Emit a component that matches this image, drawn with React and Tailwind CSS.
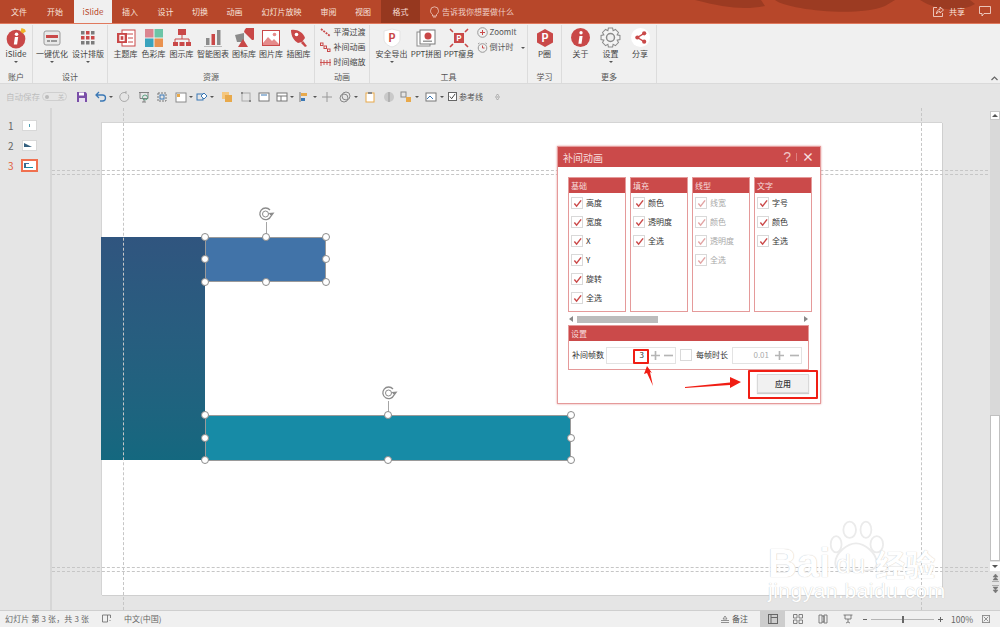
import React from "react";

const FONT = { fontFamily: '"Noto Sans CJK SC","Noto Sans",sans-serif' };

const Tab = ({ w, children, active, dark }) => (
  <div className={`flex h-full items-center justify-center text-[8px] ${w} ${active ? "bg-[#f0f0f0] text-[#b7472a]" : dark ? "bg-[#96381f] text-[#f6ddd6]" : "text-[#f8e3dd]"}`}>{children}</div>
);

const Caret = () => <span className="mt-[1px] block h-0 w-0 border-x-[2px] border-t-[2px] border-x-transparent border-t-[#555]" />;

const Item = ({ w, icon, label, caret }) => (
  <div className={`flex h-full shrink-0 flex-col items-center pt-[2px] ${w}`}>
    <div className="flex h-[21px] w-[22px] items-center justify-center">{icon}</div>
    <div className="whitespace-nowrap text-[8px] leading-[12px] text-[#444]">{label}</div>
    {caret && <Caret />}
  </div>
);

const Group = ({ w, label, children }) => (
  <div className={`flex h-full shrink-0 flex-col border-r border-[#dcdcdc] ${w}`}>
    <div className="flex h-[45px] shrink-0 justify-center">{children}</div>
    <div className="text-center text-[8px] leading-[14px] text-[#555]">{label}</div>
  </div>
);

const S = ({ children, size = 20 }) => <svg width={size} height={size} viewBox="0 0 20 20">{children}</svg>;

const ISlideIcon = () => (
  <S size={22}><circle cx="10" cy="11" r="8.5" fill="#c94848" /><circle cx="10.5" cy="6.5" r="1.6" fill="#fff" /><path d="M9 9h3l-1 7H8z" fill="#fff" /><path d="M15 1l3 1 1 2-3 2-2-2z" fill="#f0b429" /></S>
);
const OptIcon = () => (
  <S><rect x="2" y="3" width="16" height="14" rx="2" fill="#e8e8e8" stroke="#9a9a9a" /><rect x="4" y="7" width="12" height="3" fill="#c94848" /><rect x="5" y="12" width="3" height="2" fill="#999" /><rect x="9" y="12" width="6" height="2" fill="#999" /></S>
);
const GridIcon = () => (
  <S>{[3, 8, 13].flatMap((y, r) => [3, 8, 13].map((x, c) => <rect key={`${r}${c}`} x={x} y={y} width="3.5" height="3.5" fill={(r === 0 && c === 1) || r === 1 ? "#c94848" : "#7b7b7b"} />))}</S>
);
const ThemeIcon = () => (
  <S><rect x="6" y="2" width="13" height="16" fill="#fff" stroke="#c94848" /><path d="M8 6h9M12 10h5M12 14h5" stroke="#c94848" /><rect x="1" y="5" width="10" height="10" fill="#c94848" /><rect x="4" y="7.5" width="4" height="5" fill="none" stroke="#fff" strokeWidth="1.3" /></S>
);
const ColorIcon = () => (
  <S><rect x="1" y="1" width="8.5" height="8.5" fill="#db8590" /><rect x="10.5" y="1" width="8.5" height="8.5" fill="#6cc5a7" /><rect x="1" y="10.5" width="8.5" height="8.5" fill="#3aa3bd" /><rect x="10.5" y="10.5" width="8.5" height="8.5" fill="#e9924f" /></S>
);
const OrgIcon = () => (
  <S><rect x="6" y="1" width="8" height="6" fill="#c94848" /><path d="M10 7v4M3 11h14M3 11v3M17 11v3" stroke="#c94848" fill="none" /><rect x="1" y="14" width="5" height="4" fill="#c94848" /><rect x="7.5" y="14" width="5" height="4" fill="#c94848" /><rect x="14" y="14" width="5" height="4" fill="#c94848" /></S>
);
const ChartIcon = () => (
  <S><rect x="3" y="10" width="3.5" height="7" fill="#8b8b8b" /><rect x="8.5" y="6" width="3.5" height="11" fill="#c94848" /><rect x="14" y="2" width="3.5" height="15" fill="#8b8b8b" /><path d="M1 18.5h18" stroke="#bbb" /></S>
);
const IconLib = () => (
  <S><path d="M10 4a7 7 0 1 1 8 8z" fill="#c94848" /><path d="M1 7l9-2v9H3z" fill="#8b8b8b" /><path d="M9 11l5 8H4z" fill="#c94848" /></S>
);
const PicIcon = () => (
  <S><rect x="1.5" y="2.5" width="17" height="15" fill="#fff" stroke="#c94848" /><circle cx="13.5" cy="6.5" r="1.8" fill="#e58b8b" /><path d="M2 15l5-6 4 4 2-2 5 5v1H2z" fill="#e58b8b" /></S>
);
const RocketIcon = () => (
  <S><path d="M2 2c6-1 12 2 14 8l-3 4-4 1C5 13 2 8 2 2z" fill="#c94848" /><circle cx="7.5" cy="6.5" r="1.8" fill="#fff" /><path d="M14 13l4 5-2 1-4-4z" fill="#c94848" /></S>
);
const Shield = () => (
  <S><path d="M10 1l8 2v8c0 4-4 7-8 8-4-1-8-4-8-8V3z" fill="#fff" stroke="#e3e3e3" /><text x="10" y="14" textAnchor="middle" fontSize="11" fontWeight="700" fill="#c94848">P</text></S>
);
const Collage = () => (
  <S><rect x="1" y="4" width="13" height="14" fill="#fff" stroke="#8b8b8b" /><rect x="4" y="2" width="15" height="14" fill="#fff" stroke="#777" /><circle cx="12" cy="8" r="3.5" fill="#c94848" /><rect x="7" y="12.5" width="9" height="1.5" fill="#999" /></S>
);
const Slim = () => (
  <S><rect x="5" y="5" width="10" height="10" fill="#c94848" /><text x="10" y="13" textAnchor="middle" fontSize="8" fontWeight="700" fill="#fff">P</text><path d="M1 1l3 3M19 1l-3 3M1 19l3-3M19 19l-3-3" stroke="#c94848" strokeWidth="1.6" /></S>
);
const Hex = () => (
  <S><path d="M10 1l8 4.5v9L10 19l-8-4.5v-9z" fill="#c94848" /><text x="10" y="14" textAnchor="middle" fontSize="11" fontWeight="700" fill="#fff">P</text></S>
);
const About = () => (
  <S size={21}><circle cx="10" cy="10" r="9" fill="#c94848" /><circle cx="10.5" cy="5.5" r="1.6" fill="#fff" /><path d="M9 8.5h3L11 16H8z" fill="#fff" /></S>
);
const Gear = () => (
  <S size={21}><path d="M8 1h4l.5 2.5 2.2-1.2 2.9 2.9-1.3 2.2L19 8v4l-2.7.6 1.3 2.2-2.9 2.9-2.2-1.3L12 19H8l-.5-2.6-2.2 1.3-2.9-2.9 1.3-2.2L1 12V8l2.7-.6-1.3-2.2 2.9-2.9 2.2 1.2z" fill="#f4f4f4" stroke="#8b8b8b" /><circle cx="10" cy="10" r="3.8" fill="#f0f0f0" stroke="#8b8b8b" strokeWidth="1.4" /></S>
);
const ShareIcon = () => (
  <S size={21}><circle cx="10" cy="10" r="9" fill="#fff" /><path d="M13.5 6L7 10l6.5 4" stroke="#c94848" strokeWidth="1.3" fill="none" /><circle cx="13.5" cy="6" r="2" fill="#c94848" /><circle cx="7" cy="10" r="2" fill="#c94848" /><circle cx="13.5" cy="14" r="2" fill="#c94848" /></S>
);

const Q = ({ ml, children }) => <svg className={`shrink-0 ${ml}`} width="12" height="12" viewBox="0 0 12 12" fill="none">{children}</svg>;
const QCaret = ({ ml }) => <span className={`block h-0 w-0 shrink-0 border-x-[2px] border-t-[2px] border-x-transparent border-t-[#555] ${ml}`} />;

const Check = ({ dim }) => (
  <div className="flex h-[12px] w-[12px] shrink-0 items-center justify-center border border-[#d9d9d9] bg-white">
    <svg width="9" height="9" viewBox="0 0 10 10" fill="none"><path d="M1.5 5l2.5 3 5-6.5" stroke={dim ? "#e2a5a5" : "#cb4a4a"} strokeWidth="1.6" /></svg>
  </div>
);

const Panel = ({ w, title, items, dim }) => (
  <div className={`flex h-[135px] shrink-0 flex-col border border-[#e59a9a] bg-white ${w}`}>
    <div className="h-[15px] bg-[#cb4a4a] pl-[2px] text-[8px] leading-[15px] text-[#f8dede]">{title}</div>
    <div className="flex flex-col gap-[7px] pl-[2px] pt-[4px]">
      {items.map((t) => (
        <div key={t} className="flex h-[12px] items-center gap-[3px]">
          <Check dim={dim} />
          <span className={`text-[8px] leading-[12px] ${dim ? "text-[#a8a8a8]" : "text-[#333]"}`}>{t}</span>
        </div>
      ))}
    </div>
  </div>
);

const HANDLES = [
  "left-[153px] top-[129px]", "left-[214px] top-[129px]", "left-[274px] top-[129px]",
  "left-[153px] top-[151px]", "left-[274px] top-[151px]",
  "left-[153px] top-[174px]", "left-[214px] top-[174px]", "left-[274px] top-[174px]",
  "left-[153px] top-[307px]", "left-[336px] top-[307px]", "left-[519px] top-[307px]",
  "left-[153px] top-[330px]", "left-[519px] top-[330px]",
  "left-[153px] top-[352px]", "left-[336px] top-[352px]", "left-[519px] top-[352px]",
];

const Rotate = () => (
  <svg width="17" height="16" viewBox="0 0 17 16" fill="none"><path d="M12 4a5.8 5.8 0 1 0 1 6" stroke="#8c8c8c" strokeWidth="1.3" /><circle cx="7.5" cy="8" r="3" stroke="#8c8c8c" /><path d="M10.5 7l6-.5-3 4z" fill="#8c8c8c" /></svg>
);

const Plus = () => <svg className="shrink-0" width="9" height="9" viewBox="0 0 11 11"><path d="M5.5 0v11M0 5.5h11" stroke="#b5b5b5" strokeWidth="2" /></svg>;
const Minus = () => <svg className="shrink-0" width="9" height="9" viewBox="0 0 11 11"><path d="M0 5.5h11" stroke="#b5b5b5" strokeWidth="2" /></svg>;

const Thumb = ({ n, active, children }) => (
  <div className="flex h-[20px] items-center pl-[8px]">
    <span className={`w-[15px] text-[10px] ${active ? "text-[#e2613d]" : "text-[#666]"}`}>{n}</span>
    <div className={`relative h-[9px] w-[13px] bg-white ${active ? "outline-2 outline-[#f0704f]" : "outline outline-[#d8d8d8]"}`}>{children}</div>
  </div>
);

const Guide = ({ cls }) => <div className={`absolute left-0 right-[12px] border-t border-dashed border-[#c6c6c6] ${cls}`} />;

export default function App() {
  return (
    <div className="flex h-[627px] w-[1000px] flex-col overflow-hidden bg-[#e5e5e5]" style={FONT}>
      {/* tab bar */}
      <div className="relative flex h-[23px] shrink-0 items-center overflow-hidden bg-[#b7472a]">
        <svg className="absolute left-[680px] top-0" width="320" height="14" viewBox="0 0 320 14"><path d="M15 0c30 8 50 10 70 6l-4-6zM95 0c10 9 80 18 110 6l10-6zM240 0h50l5 4c-15 9-40 6-55-4z" fill="#9c3b22" /></svg>
        <Tab w="ml-[2px] w-[34px]">文件</Tab>
        <Tab w="w-[38px]">开始</Tab>
        <Tab w="w-[38px]" active>iSlide</Tab>
        <Tab w="w-[36px]">插入</Tab>
        <Tab w="w-[35px]">设计</Tab>
        <Tab w="w-[34px]">切换</Tab>
        <Tab w="w-[35px]">动画</Tab>
        <Tab w="w-[59px]">幻灯片放映</Tab>
        <Tab w="w-[35px]">审阅</Tab>
        <Tab w="w-[34px]">视图</Tab>
        <Tab w="ml-[1px] w-[39px]" dark>格式</Tab>
        <div className="ml-[10px] flex items-center gap-[3px] text-[8px] text-[#f0cfc6]">
          <svg width="9" height="12" viewBox="0 0 9 12" fill="none"><path d="M2.5 8.5C1 7.5.5 6 .5 4.8a4 4 0 0 1 8 0c0 1.2-.5 2.7-2 3.7V10h-4zM3 11h3" stroke="#f0cfc6" strokeWidth=".8" /></svg>
          <span>告诉我你想要做什么</span>
        </div>
        <div className="absolute right-[9px] top-0 flex h-full items-center gap-[14px]">
          <div className="flex items-center gap-[5px] text-[8px] text-[#f8e3dd]">
            <svg width="11" height="11" viewBox="0 0 11 11" fill="none"><path d="M4 1.5H.5v9h9V7" stroke="#f8e3dd" strokeWidth=".8" /><path d="M7 1l3.5 3L7 7V5.5C5 5.5 4 6.5 3.5 8c0-3 1.5-4.5 3.5-4.5z" stroke="#f8e3dd" strokeWidth=".8" /></svg>
            <span>共享</span>
          </div>
          <svg width="12" height="11" viewBox="0 0 12 11" fill="none"><path d="M.5.5h11v7H5L3 10V7.5H.5z" stroke="#f8e3dd" strokeWidth=".8" /></svg>
        </div>
      </div>

      {/* ribbon */}
      <div className="relative flex h-[61px] shrink-0 border-b border-t border-[#dadada] border-t-[#e0795d] bg-[#f0f0f0] pt-[1px]">
        <Group w="w-[33px]" label="账户"><Item w="w-[30px]" icon={<ISlideIcon />} label="iSlide" caret /></Group>
        <Group w="w-[75px]" label="设计">
          <Item w="w-[36px]" icon={<OptIcon />} label="一键优化" caret />
          <Item w="w-[36px]" icon={<GridIcon />} label="设计排版" caret />
        </Group>
        <Group w="w-[207px]" label="资源">
          <div className="flex pl-[2px]">
            <Item w="w-[28px]" icon={<ThemeIcon />} label="主题库" />
            <Item w="w-[28px]" icon={<ColorIcon />} label="色彩库" />
            <Item w="w-[28px]" icon={<OrgIcon />} label="图示库" />
            <Item w="w-[35px]" icon={<ChartIcon />} label="智能图表" />
            <Item w="w-[27px]" icon={<IconLib />} label="图标库" />
            <Item w="w-[27px]" icon={<PicIcon />} label="图片库" />
            <Item w="w-[28px]" icon={<RocketIcon />} label="插图库" />
          </div>
        </Group>
        <Group w="w-[55px]" label="动画">
          <div className="flex flex-col gap-[1px] pl-[1px] text-[8px] leading-[14px] text-[#444]">
            {["平滑过渡", "补间动画", "时间缩放"].map((t, i) => (
              <div key={t} className="flex items-center gap-[3px]">
                <svg width="11" height="11" viewBox="0 0 11 11" fill="none">
                  {i === 0 && <path d="M1 2l9 7" stroke="#c94848" strokeWidth="1.8" strokeDasharray="2 1" />}
                  {i === 1 && <><rect x=".5" y="1" width="2.5" height="2.5" stroke="#c94848" /><rect x="4" y="4" width="2.5" height="2.5" stroke="#c94848" /><rect x="7.5" y="7" width="2.5" height="2.5" stroke="#c94848" /></>}
                  {i === 2 && <path d="M1 2v7M4 3v5M7 3v5M10 2v7M0 5.5h11" stroke="#c94848" strokeWidth=".9" />}
                </svg>
                <span>{t}</span>
              </div>
            ))}
          </div>
        </Group>
        <Group w="w-[158px]" label="工具">
          <div className="flex pl-[2px]">
            <Item w="w-[38px]" icon={<Shield />} label="安全导出" caret />
            <Item w="w-[31px]" icon={<Collage />} label="PPT拼图" />
            <Item w="w-[35px]" icon={<Slim />} label="PPT瘦身" />
            <div className="flex w-[50px] flex-col gap-[3px] pt-[1px] text-[8px] leading-[12px] text-[#555]">
              <div className="flex items-center gap-[2px]"><svg width="11" height="11" viewBox="0 0 11 11" fill="none"><circle cx="5.5" cy="5.5" r="4.8" stroke="#999" /><path d="M5.5 3v5M3 5.5h5" stroke="#c94848" /></svg>ZoomIt</div>
              <div className="flex items-center gap-[2px]"><svg width="11" height="11" viewBox="0 0 11 11" fill="none"><circle cx="5.5" cy="6" r="4.3" stroke="#999" /><path d="M5.5 3.5V6h2" stroke="#c94848" /><path d="M1 2l1.5-1M10 2L8.5 1" stroke="#999" /></svg>倒计时<span className="ml-[5px]"><Caret /></span></div>
            </div>
          </div>
        </Group>
        <Group w="w-[34px]" label="学习"><Item w="w-[32px]" icon={<Hex />} label="P圈" /></Group>
        <Group w="w-[95px]" label="更多">
          <div className="flex pl-[2px]">
            <Item w="w-[29px]" icon={<About />} label="关于" />
            <Item w="w-[31px]" icon={<Gear />} label="设置" caret />
            <Item w="w-[28px]" icon={<ShareIcon />} label="分享" />
          </div>
        </Group>
        <svg className="absolute bottom-[2px] right-[2px]" width="7" height="5" viewBox="0 0 7 5" fill="none"><path d="M.5 4L3.5 1l3 3" stroke="#666" strokeWidth="1.2" /></svg>
      </div>

      {/* quick access */}
      <div className="flex h-[24px] shrink-0 items-center pl-[6px] pt-[1px]">
        <span className="w-[34px] whitespace-nowrap text-[8.5px] text-[#bdbdbd]">自动保存</span>
        <div className="ml-[2px] flex h-[9px] w-[25px] items-center justify-between rounded-full border border-[#cfcfcf] px-[2px] text-[6px] text-[#bbb]"><span className="h-[4px] w-[4px] rounded-full bg-[#bbb]" /><span>关</span></div>
        <Q ml="ml-[9px]"><path d="M1 1h8.5L11 2.5V11H1z" fill="#7a4fa8" /><rect x="3" y="1.5" width="5" height="3" fill="#fff" /><rect x="3" y="7" width="6" height="4" fill="#e8e0f0" /></Q>
        <Q ml="ml-[7px]"><path d="M4 1L1 4l3 3M1 4h6.5a3 3 0 0 1 0 6H5" stroke="#3b78b5" strokeWidth="1.3" /></Q>
        <QCaret ml="ml-[2px]" />
        <Q ml="ml-[5px]"><path d="M10 3.5A4.5 4.5 0 1 1 6 1.5H8M8 0v3" stroke="#aaa" strokeWidth="1" /></Q>
        <Q ml="ml-[8px]"><path d="M1 1.5h10M2 1.5v6h8v-6M6 7.5V11M4 11h4" stroke="#777" strokeWidth=".9" /><circle cx="7" cy="6.5" r="2.5" stroke="#4f9d7a" strokeWidth=".9" /></Q>
        <Q ml="ml-[6px]"><rect x="2" y="2" width="8" height="8" stroke="#777" strokeDasharray="2 1" /><rect x="4" y="4" width="4" height="4" stroke="#3b78b5" /></Q>
        <Q ml="ml-[7px]"><rect x="1" y="2" width="10" height="9" fill="#fff" stroke="#8a8a8a" /><rect x="2" y="3" width="3" height="3" fill="#e8a94b" /></Q>
        <QCaret ml="ml-[2px]" />
        <Q ml="ml-[3px]"><rect x="1" y="3" width="6" height="6" stroke="#3b78b5" /><path d="M8 2l3 3-3 3-3-3z" fill="#fff" stroke="#3b78b5" /></Q>
        <QCaret ml="ml-[2px]" />
        <Q ml="ml-[7px]"><rect x="1" y="1" width="7" height="7" fill="#f5c77e" /><rect x="4" y="4" width="7" height="7" fill="#e8a94b" /></Q>
        <Q ml="ml-[7px]"><rect x="2" y="2" width="8" height="8" stroke="#aaa" /><rect x="1" y="1" width="2" height="2" fill="#888" /><rect x="9" y="9" width="2" height="2" fill="#888" /></Q>
        <Q ml="ml-[6px]"><rect x="1" y="2" width="10" height="8" fill="#fff" stroke="#777" /><path d="M3 4h6" stroke="#3b78b5" /></Q>
        <Q ml="ml-[6px]"><rect x="1" y="2" width="10" height="8" fill="#fff" stroke="#777" /><path d="M1 5h10M5 5v5" stroke="#777" /></Q>
        <QCaret ml="ml-[2px]" />
        <Q ml="ml-[4px]"><path d="M2 1v10" stroke="#777" /><rect x="3" y="2" width="6" height="3" fill="#e8a94b" /><rect x="3" y="7" width="4" height="3" fill="#3b78b5" /></Q>
        <QCaret ml="ml-[3px]" />
        <Q ml="ml-[4px]"><path d="M6 1v10M1 6h10" stroke="#999" /></Q>
        <Q ml="ml-[6px]"><circle cx="5" cy="7" r="4" stroke="#888" /><circle cx="7" cy="5" r="4" stroke="#888" /></Q>
        <QCaret ml="ml-[3px]" />
        <Q ml="ml-[6px]"><rect x="2" y="2" width="8" height="9" fill="#fff" stroke="#e8a94b" /><rect x="4" y="1" width="4" height="2" fill="#888" /></Q>
        <Q ml="ml-[7px]"><circle cx="6" cy="6" r="5" fill="#c9c9c9" /><path d="M6 1v10" stroke="#999" /></Q>
        <Q ml="ml-[5px]"><rect x="1" y="1" width="5" height="5" stroke="#888" /><rect x="6" y="6" width="5" height="5" fill="#e8a94b" /></Q>
        <QCaret ml="ml-[3px]" />
        <Q ml="ml-[6px]"><rect x="1" y="2" width="10" height="8" fill="#fff" stroke="#777" /><path d="M2 8l3-3 3 3" stroke="#3b78b5" /></Q>
        <QCaret ml="ml-[3px]" />
        <div className="ml-[4px] flex h-[9px] w-[9px] shrink-0 items-center justify-center border border-[#666] bg-white"><svg width="7" height="7" viewBox="0 0 8 8" fill="none"><path d="M1 4l2 2.5L7 1" stroke="#333" /></svg></div>
        <span className="ml-[2px] text-[8px] text-[#555]">参考线</span>
        <svg className="ml-[12px]" width="5" height="6" viewBox="0 0 5 6" fill="none"><path d="M1 1.5L2.5.5 4 1.5M0 3h5M1 4.5l1.5 1 1.5-1" stroke="#888" strokeWidth=".7" /></svg>
      </div>

      {/* main */}
      <div className="flex min-h-0 flex-1">
        <div className="w-[52px] shrink-0 border-r-2 border-[#d6d6d6] pt-[7px]">
          <Thumb n="1"><div className="absolute left-[6px] top-[3px] h-[3px] w-[1px] bg-[#4a9cb0]" /></Thumb>
          <Thumb n="2"><svg width="13" height="9" viewBox="0 0 13 9"><path d="M1 2l8 4H1z" fill="#34607f" /></svg></Thumb>
          <Thumb n="3" active><div className="absolute left-[1px] top-[2px] h-[5px] w-[2px] bg-[#3a6c8f]" /><div className="absolute left-[3px] top-[2px] h-[1px] w-[3px] bg-[#4173a8]" /><div className="absolute left-[3px] top-[6px] h-[1px] w-[7px] bg-[#178ba6]" /></Thumb>
        </div>

        <div className="relative min-w-0 flex-1 pb-[15px] pl-[49px] pt-[14px]">
          {/* slide */}
          <div className="h-[473px] w-[841px] border-l border-t border-[#d4d4d4] bg-white shadow-[1px_1px_0_#cfcfcf]" />

          {/* shapes */}
          <div className="absolute left-[49px] top-[129px] h-[223px] w-[104px] bg-gradient-to-b from-[#30557f] to-[#14687f]" />
          <div className="absolute left-[153px] top-[129px] h-[45px] w-[121px] border border-[#9a9a9a] bg-[#4173a8]" />
          <div className="absolute left-[153px] top-[307px] h-[46px] w-[366px] border border-[#9a9a9a] bg-[#178ba6]" />

          <div className="absolute left-[214px] top-[114px] h-[15px] w-px bg-[#a5a5a5]" />
          <div className="absolute left-[206px] top-[98px]"><Rotate /></div>
          <div className="absolute left-[336px] top-[293px] h-[14px] w-px bg-[#a5a5a5]" />
          <div className="absolute left-[329px] top-[277px]"><Rotate /></div>

          {HANDLES.map((cls) => (
            <div key={cls} className={`absolute h-[8px] w-[8px] -translate-x-1/2 -translate-y-1/2 rounded-full border border-[#8c8c8c] bg-white ${cls}`} />
          ))}

          {/* guides */}
          <Guide cls="top-[62px]" />
          <Guide cls="top-[66px]" />
          <Guide cls="top-[459px]" />
          <Guide cls="top-[463px]" />
          <div className="absolute bottom-0 left-[71px] top-0 border-l border-dashed border-[#c6c6c6]" />
          <div className="absolute bottom-0 left-[869px] top-0 border-l border-dashed border-[#c6c6c6]" />

          {/* watermark */}
          <div className="absolute left-[716px] top-[412px] w-[190px] select-none">
            <svg className="absolute left-[60px] top-0" width="56" height="54" viewBox="0 0 62 58" fill="none">
              <ellipse cx="9" cy="26" rx="6" ry="9" stroke="#ebebeb" strokeWidth="2" />
              <ellipse cx="24" cy="10" rx="7" ry="9" stroke="#ebebeb" strokeWidth="2" />
              <ellipse cx="42" cy="10" rx="6" ry="9" stroke="#ebebeb" strokeWidth="2" />
              <ellipse cx="54" cy="26" rx="7" ry="9" stroke="#ebebeb" strokeWidth="2" />
              <path d="M8 47c0-12 14-22 23-22s23 10 23 22c0 9-12 9-23 7-11 2-23 2-23-7z" stroke="#ebebeb" strokeWidth="2" />
            </svg>
            <div className="relative flex h-[61px] items-end whitespace-nowrap font-['Liberation_Sans'] text-[40px] font-bold leading-[36px] text-white [text-shadow:0_0_1px_#b5b5b5]">
              <span>Bai</span>
              <span className="mb-[2px] ml-[6px] text-[26px] font-normal leading-[30px]">du</span>
              <span className="ml-[10px] text-[30px] leading-[36px]" style={FONT}>经验</span>
            </div>
            <div className="relative whitespace-nowrap font-['Liberation_Sans'] text-[21px] leading-[20px] tracking-[0.5px] text-white [text-shadow:0_0_1px_#b5b5b5]">jingyan.baidu.com</div>
          </div>

          {/* scrollbar */}
          <div className="absolute right-0 top-[3px] flex w-[10px] flex-col items-center">
            <div className="flex h-[9px] w-full items-center justify-center border border-[#c8c8c8] bg-white"><span className="h-0 w-0 border-x-[3px] border-b-[3px] border-x-transparent border-b-[#555]" /></div>
            <div className="h-[295px] w-full bg-[#d9d9d9]" />
            <div className="h-[146px] w-full border border-[#c0c0c0] bg-white" />
            <div className="mt-[1px] flex h-[9px] w-full items-center justify-center bg-white"><span className="h-0 w-0 border-x-[3px] border-t-[3px] border-x-transparent border-t-[#555]" /></div>
            <svg className="mt-[3px]" width="7" height="8" viewBox="0 0 7 8"><path d="M3.5 0L6 3H1zM3.5 3L6 6H1zM0 7.5h7" fill="#777" stroke="#777" strokeWidth=".5" /></svg>
            <svg className="mt-[3px]" width="7" height="8" viewBox="0 0 7 8"><path d="M0 .5h7M3.5 8L6 5H1zM3.5 5L6 2H1z" fill="#777" stroke="#777" strokeWidth=".5" /></svg>
          </div>

          {/* dialog */}
          <div className="absolute left-[505px] top-[38px] w-[264px] border border-[#e59a9a] bg-white shadow-[0_0_2px_#e59a9a]">
            <div className="flex h-[20px] items-center justify-between bg-[#cb4a4a] pl-[5px] pr-[6px]">
              <span className="text-[10px] text-[#f8dede]">补间动画</span>
              <div className="flex items-center gap-[5px] text-[#f0c5c5]">
                <span className="font-['Liberation_Sans'] text-[14px] leading-none">?</span>
                <span className="h-[8px] w-px bg-[#dc8080]" />
                <span className="text-[12px] font-bold leading-none text-[#f8dede]">×</span>
              </div>
            </div>
            <div className="relative h-[236px] px-[10px] pt-[10px]">
              <div className="flex gap-[4px]">
                <Panel w="w-[58px]" title="基础" items={["高度", "宽度", "X", "Y", "旋转", "全选"]} />
                <Panel w="w-[58px]" title="填充" items={["颜色", "透明度", "全选"]} />
                <Panel w="w-[58px]" title="线型" items={["线宽", "颜色", "透明度", "全选"]} dim />
                <Panel w="w-[58px]" title="文字" items={["字号", "颜色", "全选"]} />
              </div>
              <div className="mt-[2px] flex h-[10px] w-[240px] items-center pl-[1px]">
                <span className="h-0 w-0 border-y-[3px] border-r-[4px] border-y-transparent border-r-[#888]" />
                <div className="ml-[4px] h-[7px] w-[81px] bg-[#bcbcbc]" />
                <span className="ml-auto h-0 w-0 border-y-[3px] border-l-[4px] border-y-transparent border-l-[#888]" />
              </div>
              <div className="mt-[1px] h-[45px] w-[241px] border border-[#e59a9a]">
                <div className="h-[15px] bg-[#cb4a4a] pl-[2px] text-[8px] leading-[15px] text-[#f8dede]">设置</div>
                <div className="flex h-[28px] items-center pl-[3px]">
                  <span className="w-[34px] whitespace-nowrap text-[8px] text-[#333]">补间帧数</span>
                  <div className="flex h-[17px] w-[70px] shrink-0 items-center border border-[#e3e3e3]">
                    <span className="w-[37px] text-right text-[8px] text-[#333]">3</span>
                    <span className="ml-[7px]"><Plus /></span>
                    <span className="ml-[4px]"><Minus /></span>
                  </div>
                  <div className="ml-[4px] h-[12px] w-[12px] shrink-0 border border-[#d9d9d9]" />
                  <span className="ml-[4px] w-[32px] shrink-0 whitespace-nowrap text-[8px] text-[#333]">每帧时长</span>
                  <div className="ml-[4px] flex h-[17px] w-[70px] shrink-0 items-center border border-[#e3e3e3]">
                    <span className="w-[36px] text-right text-[8px] text-[#aaa]">0.01</span>
                    <span className="ml-[6px]"><Plus /></span>
                    <span className="ml-[6px]"><Minus /></span>
                  </div>
                </div>
              </div>
              <button className="absolute left-[199px] top-[207px] h-[19px] w-[52px] border border-[#d9d9d9] bg-[#f1f1f1] text-[8px] font-medium text-[#333] shadow-[0_1px_1px_#ccc]">应用</button>

              {/* annotations */}
              <div className="absolute left-[75px] top-[182px] h-[15px] w-[16px] rounded-[1px] border-2 border-[#f01e14]" />
              <div className="absolute left-[190px] top-[203px] h-[29px] w-[70px] rounded-[1px] border-2 border-[#f01e14]" />
              <svg className="absolute left-[86px] top-[199px]" width="10" height="21" viewBox="0 0 10 21"><path d="M3 0L8 7 6 6 9 20 3 7 0 8z" fill="#f01e14" /></svg>
              <svg className="absolute left-[127px] top-[208px]" width="57" height="15" viewBox="0 0 57 15"><path d="M0 12L45 7.5V2l11 5-11 6v-3L0 13z" fill="#f01e14" /></svg>
            </div>
          </div>
        </div>
      </div>

      {/* status bar */}
      <div className="flex h-[17px] shrink-0 items-center border-t border-[#cfcfcf] bg-[#f0f0f0] pl-[5px] text-[8px] text-[#666]">
        <span className="w-[85px] whitespace-nowrap tracking-[0.15px]">幻灯片 第 3 张，共 3 张</span>
        <svg className="ml-[12px]" width="10" height="10" viewBox="0 0 10 10" fill="none"><path d="M.5 1h5v7h-5zM5.5 1h3v3M8 6v1" stroke="#666" strokeWidth=".8" /></svg>
        <span className="ml-[12px]">中文(中国)</span>
        <div className="ml-auto flex h-full items-center">
          <svg width="8" height="8" viewBox="0 0 8 8" fill="none"><path d="M4 1L2 4h4zM0 5.5h8M0 7.5h8" stroke="#777" strokeWidth=".8" /></svg>
          <span className="ml-[3px] w-[28px] text-[#555]">备注</span>
          <div className="flex h-full w-[25px] items-center justify-center bg-[#cdcdcd]"><svg width="10" height="10" viewBox="0 0 10 10" fill="none"><rect x=".5" y=".5" width="9" height="9" stroke="#666" /><path d="M3 .5v9M3 3.5h6.5" stroke="#666" /></svg></div>
          <div className="flex h-full w-[25px] items-center justify-center"><svg width="10" height="10" viewBox="0 0 10 10" fill="none"><path d="M.5.5H4V4H.5zM6 .5h3.5V4H6zM.5 6H4v3.5H.5zM6 6h3.5v3.5H6z" stroke="#666" strokeWidth=".8" /></svg></div>
          <div className="flex h-full w-[25px] items-center justify-center"><svg width="10" height="10" viewBox="0 0 10 10" fill="none"><path d="M1 1h3v8H1zM6 1h3v8H6zM4 2h2v6H4" stroke="#666" strokeWidth=".8" /></svg></div>
          <div className="flex h-full w-[25px] items-center justify-center"><svg width="10" height="10" viewBox="0 0 10 10" fill="none"><path d="M.5 1h9M2 1v4h6V1M5 5v3M3 9l2-1 2 1" stroke="#666" strokeWidth=".8" /></svg></div>
          <span className="ml-[3px] h-[1px] w-[4px] bg-[#666]" />
          <div className="relative mx-[4px] h-px w-[63px] bg-[#b5b5b5]"><span className="absolute left-[31px] top-[-3px] h-[7px] w-[2px] bg-[#666]" /></div>
          <svg width="5" height="5" viewBox="0 0 5 5"><path d="M2.5 0v5M0 2.5h5" stroke="#666" /></svg>
          <span className="ml-[8px] w-[21px] text-[8.5px] text-[#666]">100%</span>
          <svg className="ml-[10px] mr-[10px]" width="8" height="8" viewBox="0 0 9 9" fill="none"><rect x=".5" y=".5" width="8" height="8" stroke="#888" /><path d="M2 2l5 5M7 2L2 7" stroke="#888" /></svg>
        </div>
      </div>
    </div>
  );
}
